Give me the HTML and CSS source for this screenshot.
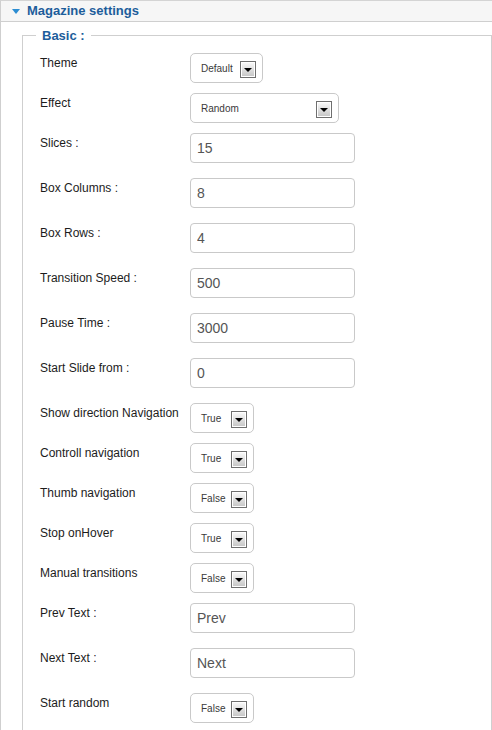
FILE: index.html
```html
<!DOCTYPE html>
<html>
<head>
<meta charset="utf-8">
<title>Magazine settings</title>
<link rel="stylesheet" href="styles.css">
</head>
<body>
<div class="panel">
  <div class="panel-head"><span class="caret"></span><span class="title">Magazine settings</span></div>
  <fieldset class="group">
    <legend>Basic :</legend>

    <div class="row row-sel"><label>Theme</label><div class="sel w-theme"><span>Default</span><i class="btn"></i></div></div>
    <div class="row row-sel"><label>Effect</label><div class="sel w-effect"><span>Random</span><i class="btn"></i></div></div>
    <div class="row row-txt"><label>Slices :</label><input class="txt" type="text" value="15"></div>
    <div class="row row-txt"><label>Box Columns :</label><input class="txt" type="text" value="8"></div>
    <div class="row row-txt"><label>Box Rows :</label><input class="txt" type="text" value="4"></div>
    <div class="row row-txt"><label>Transition Speed :</label><input class="txt" type="text" value="500"></div>
    <div class="row row-txt"><label>Pause Time :</label><input class="txt" type="text" value="3000"></div>
    <div class="row row-txt"><label>Start Slide from :</label><input class="txt" type="text" value="0"></div>
    <div class="row row-sel"><label>Show direction Navigation</label><div class="sel w-bool"><span>True</span><i class="btn"></i></div></div>
    <div class="row row-sel"><label>Controll navigation</label><div class="sel w-bool"><span>True</span><i class="btn"></i></div></div>
    <div class="row row-sel"><label>Thumb navigation</label><div class="sel w-bool"><span>False</span><i class="btn"></i></div></div>
    <div class="row row-sel"><label>Stop onHover</label><div class="sel w-bool"><span>True</span><i class="btn"></i></div></div>
    <div class="row row-sel"><label>Manual transitions</label><div class="sel w-bool"><span>False</span><i class="btn"></i></div></div>
    <div class="row row-txt"><label>Prev Text :</label><input class="txt" type="text" value="Prev"></div>
    <div class="row row-txt"><label>Next Text :</label><input class="txt" type="text" value="Next"></div>
    <div class="row row-sel"><label>Start random</label><div class="sel w-bool"><span>False</span><i class="btn"></i></div></div>
  </fieldset>
</div>
</body>
</html>
```

FILE: styles.css
```css
html, body {
  margin: 0;
  padding: 0;
  background: #fff;
}
body {
  font-family: "Liberation Sans", Arial, sans-serif;
  overflow: hidden;
}
.panel {
  border-left: 1px solid #cfcfcf;
  border-top: 1px solid #d4d4d4;
}
.panel-head {
  height: 20px;
  background: #f6f6f6;
  border-bottom: 1px solid #cfcfcf;
  display: flex;
  align-items: center;
  padding-left: 11px;
}
.caret {
  width: 0;
  height: 0;
  border-left: 4px solid transparent;
  border-right: 4px solid transparent;
  border-top: 5px solid #2c8dd2;
  margin-right: 7px;
}
.title {
  font-size: 13px;
  font-weight: bold;
  color: #1d5d9b;
  line-height: 20px;
}
.group {
  margin: 6px 0 0 21px;
  padding: 10px 0 20px 17px;
  border: 1px solid #cfcfcf;
  border-bottom: none;
  min-width: 0;
}
.group legend {
  font-size: 13px;
  font-weight: bold;
  color: #1d5d9b;
  line-height: 15px;
  padding: 0 6px;
  margin-left: -4px;
}
.row {
  display: flex;
  align-items: flex-start;
}
.row-sel { margin-bottom: 10px; }
.row-txt { margin-bottom: 15px; }
.row label {
  flex: 0 0 150px;
  font-size: 12px;
  line-height: 14px;
  color: #1c1c1c;
  padding-top: 3px;
}
.sel {
  box-sizing: border-box;
  height: 30px;
  border: 1px solid #c9c9c9;
  border-radius: 5px;
  display: flex;
  align-items: center;
  justify-content: space-between;
  padding: 1px 6px 0 10px;
  font-size: 10px;
  color: #3a3a3a;
}
.w-theme { width: 73px; }
.w-effect { width: 149px; }
.w-bool { width: 64px; }
.btn {
  box-sizing: border-box;
  width: 16px;
  height: 17px;
  border: 1px solid #6f6f6f;
  background: linear-gradient(#fbfbfb, #c4c4c4);
  box-shadow: inset 0 0 0 1px #ffffff;
  display: flex;
  align-items: center;
  justify-content: center;
  margin-top: 2px;
}
.btn::after {
  content: "";
  width: 0;
  height: 0;
  border-left: 4px solid transparent;
  border-right: 4px solid transparent;
  border-top: 4px solid #000;
}
.txt {
  box-sizing: border-box;
  width: 165px;
  height: 30px;
  margin: 0;
  border: 1px solid #c9c9c9;
  border-radius: 4px;
  padding: 0 6px;
  font-family: "Liberation Sans", Arial, sans-serif;
  font-size: 14px;
  color: #555;
  background: #fff;
  outline: none;
}
```
